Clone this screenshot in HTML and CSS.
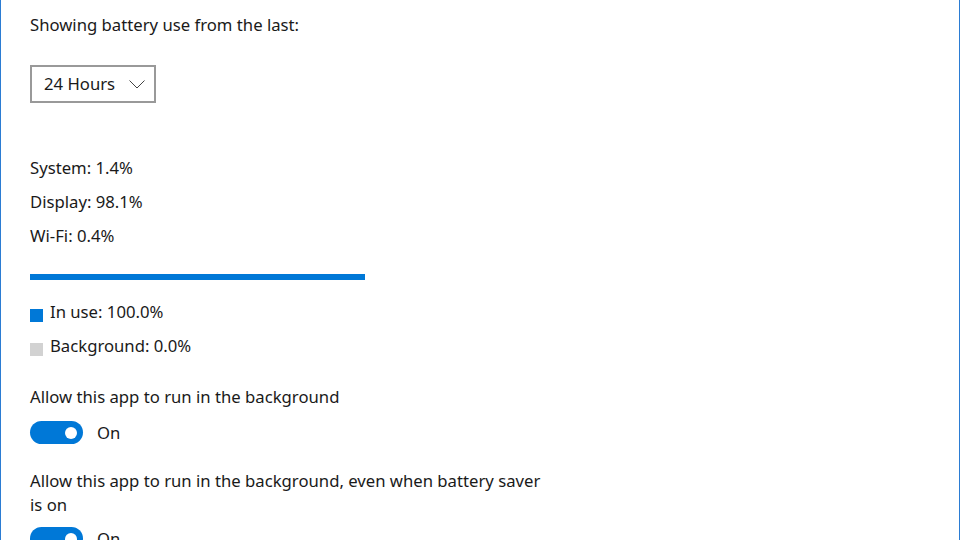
FILE: index.html
```html
<!DOCTYPE html>
<html>
<head>
<meta charset="utf-8">
<link rel="stylesheet" href="styles.css">
</head>
<body>
<div class="frame">
  <div class="content">
    <p class="line">Showing battery use from the last:</p>
    <div class="dropdown">
      <span class="dd-label">24 Hours</span>
      <svg class="chev" width="16" height="9" viewBox="0 0 16 9"><path d="M0.5 0.5 L8 8 L15.5 0.5" fill="none" stroke="#444" stroke-width="1"/></svg>
    </div>
    <div class="stats">
      <p class="row">System: 1.4%</p>
      <p class="row">Display: 98.1%</p>
      <p class="row">Wi-Fi: 0.4%</p>
    </div>
    <div class="bar"><div class="bar-fill" style="width:100%"></div></div>
    <div class="legend">
      <div class="row legend-row"><span class="swatch swatch-blue"></span><span>In use: 100.0%</span></div>
      <div class="row legend-row"><span class="swatch swatch-gray"></span><span>Background: 0.0%</span></div>
    </div>
    <div class="setting">
      <p class="label">Allow this app to run in the background</p>
      <div class="toggle-row"><span class="toggle"><span class="knob"></span></span><span class="state">On</span></div>
    </div>
    <div class="setting setting-second">
      <p class="label">Allow this app to run in the background, even when battery saver is on</p>
      <div class="toggle-row"><span class="toggle"><span class="knob"></span></span><span class="state">On</span></div>
    </div>
  </div>
</div>
</body>
</html>
```
FILE: styles.css
```css
html, body {
  margin: 0;
  padding: 0;
  height: 100%;
  overflow: hidden;
}
body {
  background: #ffffff;
  font-family: "Segoe UI", "Noto Sans", "Open Sans", sans-serif;
  font-size: 16.7px;
  color: #1a1a1a;
}
.frame {
  box-sizing: border-box;
  height: 540px;
  width: 960px;
  border-left: 1px solid #2b7cd3;
  border-right: 1px solid #2b7cd3;
}
.content {
  padding: 13px 0 0 29px;
  width: 525px;
}
p { margin: 0; }
.line {
  line-height: 24px;
}
.dropdown {
  margin-top: 28px;
  box-sizing: border-box;
  width: 126px;
  height: 38px;
  border: 2px solid #999999;
  display: flex;
  align-items: center;
  padding: 0 0 0 12px;
  gap: 14px;
}
.dd-label { line-height: 20px; }
.chev { margin-top: 1px; flex: none; }
.stats {
  margin-top: 48px;
}
.row {
  height: 34px;
  line-height: 34px;
}
.bar {
  margin-top: 21px;
  width: 335px;
  height: 6px;
  background: #cccccc;
}
.bar-fill {
  height: 100%;
  background: #0078d7;
}
.legend {
  margin-top: 15px;
}
.legend-row {
  display: flex;
  align-items: center;
  gap: 7px;
}
.swatch {
  width: 13px;
  height: 13px;
  margin-top: 7px;
  flex: none;
}
.swatch-blue { background: #0078d7; }
.swatch-gray { background: #d2d2d2; }
.setting {
  margin-top: 22px;
}
.setting-second {
  margin-top: 25px;
}
.label {
  line-height: 24px;
}
.toggle-row {
  margin-top: 12px;
  display: flex;
  align-items: center;
  gap: 14px;
}
.setting-second .toggle-row {
  margin-top: 10px;
}
.toggle {
  width: 53px;
  height: 23px;
  border-radius: 12px;
  background: #0078d7;
  display: flex;
  align-items: center;
  justify-content: flex-end;
  padding-right: 6px;
  box-sizing: border-box;
}
.knob {
  width: 12px;
  height: 12px;
  border-radius: 50%;
  background: #ffffff;
}
.state { line-height: 20px; }
```
